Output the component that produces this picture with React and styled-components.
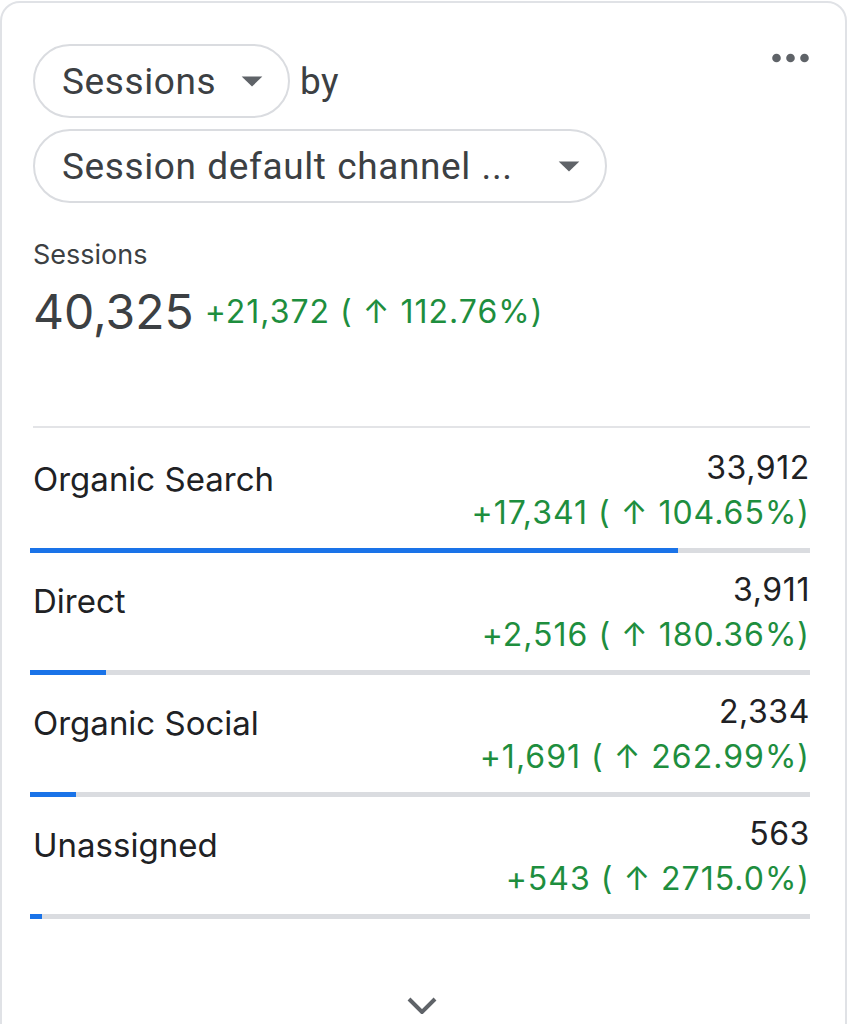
import React from 'react';
import styled, { createGlobalStyle } from 'styled-components';

const GlobalStyle = createGlobalStyle`
  html, body {
    margin: 0;
    padding: 0;
    background: #fff;
    overflow: hidden;
  }
  body {
    font-family: Inter, Roboto, "Liberation Sans", sans-serif;
    color: #202124;
  }
`

const Card = styled.div`
  box-sizing: border-box;
  width: 847px;
  min-height: 1100px;
  margin-top: 1px;
  border: 2px solid #e0e2e6;
  border-radius: 20px;
  padding: 41px 35px 0 31px;
`
const Header = styled.div`
  display: flex;
  justify-content: space-between;
  align-items: flex-start;
`
const Selectors = styled.div`
  display: flex;
  flex-direction: column;
  gap: 11px;
`
const SelectorRow = styled.div`
  display: flex;
  align-items: center;
  gap: 10px;
`
const Pill = styled.button`
  box-sizing: border-box;
  display: flex;
  align-items: center;
  justify-content: space-between;
  width: ${p => p.$width}px;
  height: 74px;
  padding: 0 25px 0 27px;
  border: 2px solid #dadce0;
  border-radius: 37px;
  background: #fff;
  font-family: Roboto, sans-serif;
  font-size: 37px;
  letter-spacing: 0.6px;
  word-spacing: 1px;
  color: #3c4043;
  cursor: pointer;
`
const By = styled.span`
  font-family: Roboto, sans-serif;
  font-size: 37px;
  letter-spacing: 0.5px;
  color: #3c4043;
`
const MoreButton = styled.div`
  margin-top: 9px;
  display: flex;
`
const MetricLabel = styled.div`
  margin-top: 36px;
  font-size: 27px;
  line-height: 32px;
  color: #3c4043;
`
const Total = styled.div`
  display: flex;
  align-items: center;
  gap: 11px;
  margin-top: 11px;
`
const BigNumber = styled.span`
  font-size: 48px;
  line-height: 60px;
  color: #3c4043;
`
const Delta = styled.span`
  font-size: 32px;
  line-height: 40px;
  letter-spacing: 1px;
  color: #1e8e3e;
  white-space: nowrap;
`
const Divider = styled.div`
  height: 2px;
  background: #e3e4e7;
  margin-top: 84px;
  margin-bottom: 3px;
`
const Row = styled.div`
  padding-top: 17px;
`
const RowTop = styled.div`
  display: flex;
  justify-content: space-between;
  align-items: flex-start;
`
const RowLabel = styled.div`
  margin-top: 9px;
  font-size: 33px;
  line-height: 44px;
  color: #202124;
`
const Values = styled.div`
  display: flex;
  flex-direction: column;
  align-items: flex-end;
  gap: 5px;
`
const Value = styled.span`
  font-size: 32px;
  line-height: 40px;
  letter-spacing: 0.6px;
  color: #202124;
`
const Track = styled.div`
  margin: 15px 0 0 -3px;
  height: 5px;
  background: #dadce0;
`
const Fill = styled.div`
  height: 100%;
  background: #1a73e8;
`
const Footer = styled.div`
  display: flex;
  justify-content: center;
  margin-top: 78px;
`

const rows = [
  { name: 'Organic Search', value: '33,912', delta: '+17,341', pct: '104.65%', fill: 83.1 },
  { name: 'Direct', value: '3,911', delta: '+2,516', pct: '180.36%', fill: 9.7 },
  { name: 'Organic Social', value: '2,334', delta: '+1,691', pct: '262.99%', fill: 5.9 },
  { name: 'Unassigned', value: '563', delta: '+543', pct: '2715.0%', fill: 1.5 },
]

const DropArrow = () => (
  <svg width="22" height="11" viewBox="0 0 10 5">
    <path d="M0.3 0.2h9.4L5 4.8z" fill="#5f6368" />
  </svg>
)

export default function App() {
  return (
    <>
      <GlobalStyle />
      <Card>
        <Header>
          <Selectors>
            <SelectorRow>
              <Pill $width={257}>
                <span>Sessions</span>
                <DropArrow />
              </Pill>
              <By>by</By>
            </SelectorRow>
            <SelectorRow>
              <Pill $width={574}>
                <span>Session default channel ...</span>
                <DropArrow />
              </Pill>
            </SelectorRow>
          </Selectors>
          <MoreButton>
            <svg width="38" height="10" viewBox="0 0 38 10">
              <circle cx="4.5" cy="5" r="4.3" fill="#5f6368" />
              <circle cx="18.5" cy="5" r="4.3" fill="#5f6368" />
              <circle cx="32.5" cy="5" r="4.3" fill="#5f6368" />
            </svg>
          </MoreButton>
        </Header>

        <MetricLabel>Sessions</MetricLabel>
        <Total>
          <BigNumber>40,325</BigNumber>
          <Delta>+21,372 ( ↑ 112.76%)</Delta>
        </Total>

        <Divider />
        {rows.map(r => (
          <Row key={r.name}>
            <RowTop>
              <RowLabel>{r.name}</RowLabel>
              <Values>
                <Value>{r.value}</Value>
                <Delta>{r.delta} ( ↑ {r.pct})</Delta>
              </Values>
            </RowTop>
            <Track>
              <Fill style={{ width: `${r.fill}%` }} />
            </Track>
          </Row>
        ))}

        <Footer>
          <svg width="30" height="17" viewBox="0 0 30 17">
            <path d="M2 2l13 13L28 2" fill="none" stroke="#5f6368" strokeWidth="4" />
          </svg>
        </Footer>
      </Card>
    </>
  )
}
